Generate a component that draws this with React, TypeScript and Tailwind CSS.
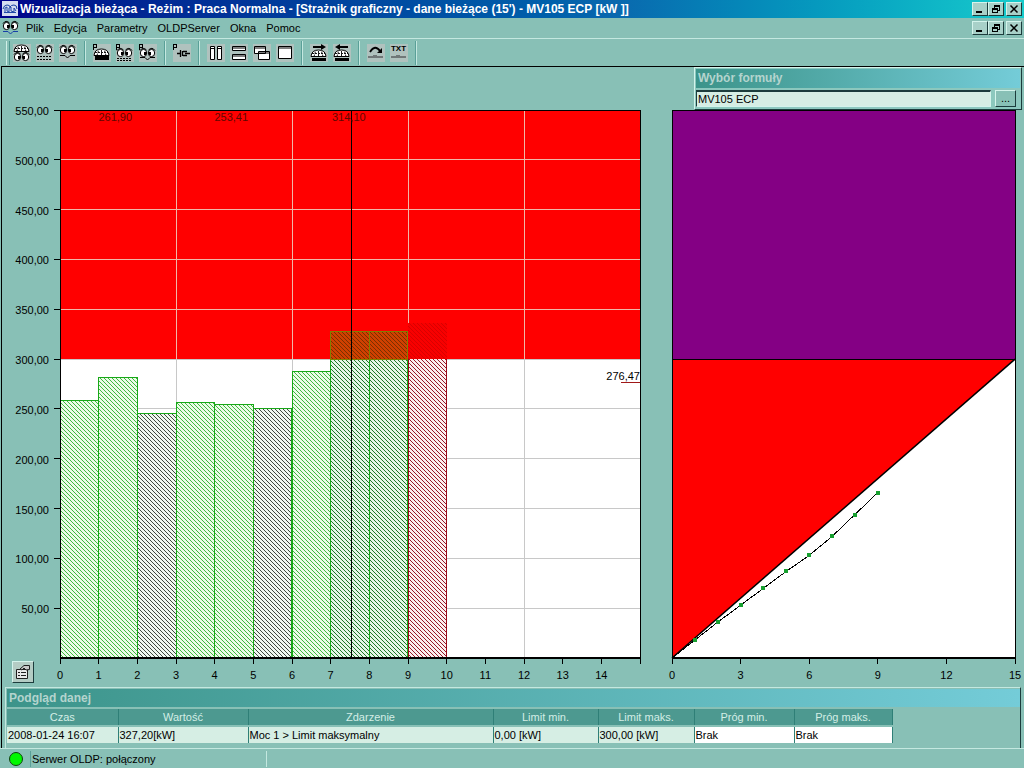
import React from "react";

const BARS = [
  { value: 258, hatch: "green" },
  { value: 282, hatch: "green" },
  { value: 245, hatch: "dark" },
  { value: 256, hatch: "green" },
  { value: 254, hatch: "green" },
  { value: 250, hatch: "dark" },
  { value: 288, hatch: "green" },
  { value: 328, hatch: "deep" },
  { value: 328, hatch: "deep" },
];
const POINTS = [18, 36, 53, 70, 87, 103, 122, 144, 166];
const Y_TICKS = [550, 500, 450, 400, 350, 300, 250, 200, 150, 100, 50];
const MAX = 550;
const LIMIT = 300;

const px = (v: number) => `${(v / 15) * 100}%`;
const py = (v: number) => `${((MAX - v) / MAX) * 100}%`;
const ph = (v: number) => `${(v / MAX) * 100}%`;

const RAISED =
  "border border-t-[#d4f4ec] border-l-[#d4f4ec] border-r-[#1c3c3c] border-b-[#1c3c3c]";
const HEAD = "border-r border-[#2f7f77] bg-[#4d9990] text-center font-normal text-[#d4eee6]";
const CELL = "border-r border-[#2f7f77] bg-[#d6eee4] px-px";
const CELL_WHITE = "border-r border-[#2f7f77] bg-white px-px";

function Hatch({ id, color, back }: { id: string; color: string; back: string }) {
  return (
    <pattern id={id} width="4" height="4" patternUnits="userSpaceOnUse">
      <rect width="4" height="4" fill={back} />
      <path d="M0 0h1v1h-1zM1 1h1v1h-1zM2 2h1v1h-1zM3 3h1v1h-1z" fill={color} shapeRendering="crispEdges" />
    </pattern>
  );
}

function BarChart() {
  return (
    <svg
      className="block w-0 min-w-0 flex-[580] overflow-visible text-[11px]"
      role="img"
      aria-label="Wykres słupkowy"
    >
      <defs>
        <Hatch id="green" color="#40b840" back="#ecfbe8" />
        <Hatch id="dark" color="#404840" back="#f0f8f0" />
        <Hatch id="deep" color="#207828" back="#e6f6e6" />
        <Hatch id="over" color="#7a3000" back="#d04000" />
        <Hatch id="red" color="#981828" back="#fbeeee" />
        <Hatch id="redOver" color="#d80000" back="#f80000" />
      </defs>
      <g shapeRendering="crispEdges">
        <rect width="100%" height="100%" fill="#fff" />
        <rect width="100%" height={ph(MAX - LIMIT)} fill="#f00" />
        {Y_TICKS.slice(1).map((v) => (
          <line key={v} x1="0" x2="100%" y1={py(v)} y2={py(v)} stroke={v > LIMIT ? "#f0b8a8" : "#c8c8c8"} />
        ))}
        {[3, 6, 9, 12].map((v) => (
          <g key={v}>
            <line x1={px(v)} x2={px(v)} y1="0" y2={py(LIMIT)} stroke="#f0b8a8" />
            <line x1={px(v)} x2={px(v)} y1={py(LIMIT)} y2="100%" stroke="#c8c8c8" />
          </g>
        ))}
        {BARS.map((b, i) => (
          <g key={i}>
            <rect
              x={px(i)}
              y={py(Math.min(b.value, LIMIT))}
              width={px(1)}
              height={ph(Math.min(b.value, LIMIT))}
              fill={`url(#${b.hatch})`}
            />
            {b.value > LIMIT && (
              <rect x={px(i)} y={py(b.value)} width={px(1)} height={ph(b.value - LIMIT)} fill="url(#over)" />
            )}
            <rect x={px(i)} y={py(b.value)} width={px(1)} height={ph(b.value)} fill="none" stroke="#18a818" />
            {b.value > LIMIT && (
              <rect
                x={px(i)}
                y={py(b.value)}
                width={px(1)}
                height={ph(b.value - LIMIT)}
                fill="none"
                stroke="#808000"
              />
            )}
          </g>
        ))}
        <rect x={px(9)} y={py(336)} width={px(1)} height={ph(36)} fill="url(#redOver)" />
        <rect x={px(9)} y={py(LIMIT)} width={px(1)} height={ph(LIMIT)} fill="url(#red)" />
        <line x1={px(9)} x2={px(9)} y1={py(LIMIT)} y2="100%" stroke="#980818" />
        <line x1={px(10)} x2={px(10)} y1={py(LIMIT)} y2="100%" stroke="#980818" />
        <line x1={px(7.53)} x2={px(7.53)} y1="0" y2="100%" stroke="#000" />
        <line x1="96.7%" x2="100%" y1={py(276.47)} y2={py(276.47)} stroke="#a01818" />
        <rect width="100%" height="100%" fill="none" stroke="#000" />
        <line x1="0" x2="100%" y1="100%" y2="100%" stroke="#000" strokeWidth="2" />
        {Y_TICKS.map((v) => (
          <line key={v} x1="-6" x2="0" y1={py(v)} y2={py(v)} stroke="#000" />
        ))}
        {Array.from({ length: 16 }, (_, i) => (
          <svg key={i} x={px(i)} y="100%" overflow="visible">
            <line x1="0" x2="0" y1="0" y2="6" stroke="#000" />
          </svg>
        ))}
      </g>
      <text x={px(1.43)} y="11" textAnchor="middle" fill="#600800">261,90</text>
      <text x={px(4.43)} y="11" textAnchor="middle" fill="#600800">253,41</text>
      <text x={px(7.47)} y="11" textAnchor="middle" fill="#600800">314,10</text>
      <text x="100%" y={py(276.47)} dy="-3" textAnchor="end">276,47</text>
      {Y_TICKS.map((v) => (
        <text key={v} x="-11" y={py(v)} dy="5" textAnchor="end">
          {`${v},00`}
        </text>
      ))}
      {Array.from({ length: 15 }, (_, i) => (
        <text key={i} x={px(i)} y="100%" dy="21" textAnchor="middle">
          {i}
        </text>
      ))}
    </svg>
  );
}

function LineChart() {
  const pts = [[0, 0], ...POINTS.map((v, i) => [i + 1, v])];
  return (
    <svg
      className="block w-0 min-w-0 flex-[343] overflow-visible text-[11px]"
      role="img"
      aria-label="Wykres liniowy"
    >
      <rect width="100%" height="100%" fill="#fff" />
      <rect width="100%" height={ph(MAX - LIMIT)} fill="#840084" />
      <svg viewBox="0 0 15 550" width="100%" height="100%" preserveAspectRatio="none">
        <path d="M0 250H15L0 550Z" fill="#f00" />
      </svg>
      <line x1="0" x2="100%" y1={py(LIMIT)} y2={py(LIMIT)} stroke="#000" shapeRendering="crispEdges" />
      <line x1="0" x2="100%" y1="100%" y2={py(LIMIT)} stroke="#000" strokeWidth="1.5" />
      {pts.slice(1).map((p, i) => (
        <line key={i} x1={px(pts[i][0])} y1={py(pts[i][1])} x2={px(p[0])} y2={py(p[1])} stroke="#000" shapeRendering="crispEdges" />
      ))}
      {POINTS.map((v, i) => (
        <svg key={i} x={px(i + 1)} y={py(v)} overflow="visible">
          <rect x="-2" y="-2" width="4" height="4" fill="#18a030" shapeRendering="crispEdges" />
        </svg>
      ))}
      <g shapeRendering="crispEdges">
        <rect width="100%" height="100%" fill="none" stroke="#000" />
        <line x1="0" x2="100%" y1="100%" y2="100%" stroke="#000" strokeWidth="2" />
        {[0, 3, 6, 9, 12, 15].map((v) => (
          <svg key={v} x={px(v)} y="100%" overflow="visible">
            <line x1="0" x2="0" y1="0" y2="6" stroke="#000" />
          </svg>
        ))}
      </g>
      {[0, 3, 6, 9, 12, 15].map((v) => (
        <text key={v} x={px(v)} y="100%" dy="21" textAnchor="middle">
          {v}
        </text>
      ))}
    </svg>
  );
}

function Eyes({ y = 0 }: { y?: number }) {
  return (
    <g transform={`translate(0 ${y})`}>
      <path d="M1 3.5Q4 -.5 7.5 3M9.5 3Q13 -.5 16 3.5" fill="none" stroke="#000" />
      <ellipse cx="4.5" cy="6" rx="3.2" ry="3.6" fill="#fff" stroke="#000" />
      <ellipse cx="12.5" cy="6" rx="3.2" ry="3.6" fill="#fff" stroke="#000" />
      <rect x="5" y="5" width="2" height="3" />
      <rect x="10" y="5" width="2" height="3" />
    </g>
  );
}

function Dome({ y = 0 }: { y?: number }) {
  return (
    <g transform={`translate(0 ${y})`}>
      <path d="M1 7.5Q1.500 1 8.500 1Q15.500 1 16 7.500Z" fill="#fff" stroke="#000" />
      <path d="M4 7.500L5.500 2.500M8.500 7V1M13 7.500L11.500 2.500M2 4.500H15" fill="none" stroke="#000" strokeWidth=".9" strokeDasharray="2 1" />
    </g>
  );
}

const P_MARK = <path d="M.5 6V.5H3.500V3.500H1" fill="none" stroke="#000" shapeRendering="crispEdges" />;

const ICONS: Record<string, React.ReactNode> = {
  domeEyes: <><Dome /><Eyes y={7} /></>,
  eyesList: <><Eyes /><path d="M1 12.500H16M1 15.500H16" stroke="#000" strokeDasharray="2 1" /></>,
  eyesLine: <><Eyes /><path d="M1 11.500H6L8.500 14L11 11.500H16" fill="none" stroke="#000" /></>,
  pDome: <><Dome y={4} />{P_MARK}<rect x="2" y="12" width="14" height="4" /></>,
  pEyesList: <><Eyes y={3} />{P_MARK}<path d="M1 14.500H16M1 16.500H16" stroke="#000" strokeDasharray="2 1" /></>,
  pEyesLine: <><Eyes y={3} />{P_MARK}<path d="M1 13.500H6L8.500 16L11 13.500H16" fill="none" stroke="#000" /></>,
  pPlug: <>{P_MARK}<path d="M4 9.500H8M7.500 6V13M9.500 7V12M10 7.500H14M10 11.500H14M12 9.500H17" fill="none" stroke="#000" strokeWidth="1.3" /></>,
  columns: <path d="M3.500 2.500h4v13h-4zM10.500 2.500h4v13h-4zM3.500 4.500h4M10.500 4.500h4" fill="#fff" stroke="#000" />,
  rows: <path d="M2.500 2.500h13v4h-13zM2.500 10.500h13v5h-13zM2.500 4h13M2.500 12h13" fill="#fff" stroke="#000" />,
  cascade: <path d="M1.500 2.500h11v7h-11zM1.500 4h11M5.500 7.500h11v8h-11zM5.500 9h11" fill="#fff" stroke="#000" />,
  single: <path d="M2.500 2.500h13v12h-13zM2.500 4h13" fill="#fff" stroke="#000" />,
  right: <><path d="M3 2h8V0l5 3-5 3V4H3z" /><Dome y={5} /><rect x="2" y="14" width="14" height="3" /></>,
  left: <><path d="M15 2H7V0L2 3l5 3V4h8z" /><Dome y={5} /><rect x="2" y="14" width="14" height="3" /></>,
  curve: <><path d="M3 8Q8 0 13 7" fill="none" stroke="#000" strokeWidth="1.800" /><path d="M15 4V9H10z" /><path d="M1 12h5v-1h4v1h6v2H1z" fill="#707878" /></>,
  txt: <><text x="8.500" y="7" textAnchor="middle" fontSize="8" fontWeight="bold">TXT</text><path d="M1 12h5v-1h4v1h6v2H1z" fill="#707878" /></>,
};

const TOOL_GROUPS = [
  [["domeEyes", "Strażnik"], ["eyesList", "Dane"], ["eyesLine", "Przebieg"]],
  [["pDome", "Parametry strażnika"], ["pEyesList", "Parametry danych"], ["pEyesLine", "Parametry przebiegu"]],
  [["pPlug", "Połączenie"]],
  [["columns", "Okna pionowo"], ["rows", "Okna poziomo"], ["cascade", "Kaskada"], ["single", "Maksymalizuj"]],
  [["right", "Następny"], ["left", "Poprzedni"]],
  [["curve", "Wykres"], ["txt", "Tekst"]],
];

function WindowButtons() {
  const cls = `${RAISED} flex h-[14px] w-4 items-center justify-center bg-[#a8d0c8]`;
  return (
    <div className="ml-auto flex">
      <button className={cls} aria-label="Minimalizuj">
        <svg width="10" height="10" shapeRendering="crispEdges"><rect x="1" y="7" width="6" height="2" /></svg>
      </button>
      <button className={cls} aria-label="Przywróć">
        <svg width="10" height="10" fill="none" stroke="#000" shapeRendering="crispEdges">
          <path d="M3.500 4V1.500H8.500V6.500H7M3 2H9M1.500 4.500H6.500V8.500H1.500ZM1 5H7" />
        </svg>
      </button>
      <button className={`${cls} ml-[2px]`} aria-label="Zamknij">
        <svg width="10" height="10" stroke="#000" strokeWidth="1.500"><path d="M1.500 1.500L8.500 8.500M8.500 1.500L1.500 8.500" /></svg>
      </button>
    </div>
  );
}

export default function App() {
  return (
    <div className="flex min-h-screen flex-col bg-[#88c0b6] font-['Liberation_Sans',Arial,sans-serif] text-[11px] leading-[14px] text-black">
      <header>
        <div className="flex h-[18px] items-center bg-linear-to-r from-[#00008a] via-[#0a68ae] via-60% to-[#18cccc] px-[2px]">
          <svg width="16" height="16" className="shrink-0" aria-hidden="true">
            <rect width="16" height="15" fill="#d4dcf0" />
            <path d="M1 8Q2 4 5 4T8 6Q9 4 12 4T15 8" fill="none" stroke="#1840a0" />
            <path d="M3 11V7L5 6V10L7 11V7L9 6V10L12 11V7L14 10M2 11.500H14" fill="none" stroke="#2048a8" />
          </svg>
          <h1 className="ml-[2px] whitespace-nowrap text-[12px] font-bold text-white">
            Wizualizacja bieżąca - Reżim : Praca Normalna - [Strażnik graficzny - dane bieżące (15') - MV105 ECP [kW ]]
          </h1>
          <WindowButtons />
        </div>
        <nav className="flex h-5 items-center px-[2px]" aria-label="Menu">
          <svg width="18" height="16" viewBox="0 0 18 16" className="mr-[6px]" aria-hidden="true">
            <Eyes />
            <path d="M1 11.500H6L8.500 14L11 11.500H16" fill="none" stroke="#1840a8" />
          </svg>
          <div className="flex gap-[10px]">
            {["Plik", "Edycja", "Parametry", "OLDPServer", "Okna", "Pomoc"].map((m) => (
              <button key={m}>{m}</button>
            ))}
          </div>
          <WindowButtons />
        </nav>
        <div className="flex h-7 items-center border-t border-[#c4e8e0] pl-[6px]" role="toolbar" aria-label="Narzędzia">
          <span className="h-6 w-1 border-x border-l-[#d0f0e8] border-r-[#4c948c]" />
          {TOOL_GROUPS.map((g, i) => (
            <React.Fragment key={i}>
              {g.map(([icon, label]) => (
                <button key={icon} aria-label={label} className="flex w-[23px] justify-center">
                  <svg width="18" height="18" viewBox="0 0 18 18" className="bg-[#b0c2be]">
                    {ICONS[icon]}
                  </svg>
                </button>
              ))}
              <span className="flex w-[11px] justify-center">
                <span className="h-6 w-[2px] border-x border-l-[#5aa098] border-r-[#c4e8e0]" />
              </span>
            </React.Fragment>
          ))}
        </div>
      </header>

      <main className="ml-px flex flex-1 flex-col border-t border-l border-black">
        <div className="flex h-[43px] justify-end pr-[2px]">
          <section className={`${RAISED} z-10 flex w-[328px] flex-col bg-[#8cc8be] p-px`}>
            <h2 className="h-[19px] bg-linear-to-r from-[#3c948a] to-[#74ccd8] px-[2px] text-[12px] leading-[19px] font-bold text-[#b4d4ce]">
              Wybór formuły
            </h2>
            <div className="mt-[2px] flex h-[17px] gap-1 pr-1">
              <input
                aria-label="Formuła"
                defaultValue="MV105 ECP"
                className="min-w-0 flex-1 border border-t-2 border-t-[#1c3c3c] border-l-[#1c3c3c] border-r-[#d4f4ec] border-b-[#d4f4ec] bg-[#d6eee4] px-px"
              />
              <button aria-label="Wybierz formułę" className={`${RAISED} w-[21px] bg-[#88c0b6] leading-[13px]`}>...</button>
            </div>
          </section>
        </div>
        <div className="flex flex-1 gap-8 pr-[9px] pl-[58px]">
          <BarChart />
          <LineChart />
        </div>
        <div className="h-[29px] pt-[3px] pl-[10px]">
          <button aria-label="Właściwości" className={`${RAISED} flex h-[22px] w-[22px] items-center justify-center bg-[#b4ccc4]`}>
            <svg width="16" height="16" viewBox="0 0 16 16" fill="#e8e8e8" stroke="#202020">
              <path d="M1.500 5.500H12.500V14.500H1.500Z" />
              <path d="M3 8.500H5M6 8.500H11M3 11.500H5M6 11.500H11" />
              <path d="M5 5L9 1.500H14.500V5.500L11 6L9 4L7 6Z" fill="#c8c8c8" />
            </svg>
          </button>
        </div>
        <section className="mr-[3px] ml-[3px] border-t border-l border-r border-t-[#c4e8e0] border-l-[#c4e8e0] border-r-[#1c3c3c] pt-px pb-[5px] pl-px">
          <h2 className="h-[18px] bg-linear-to-r from-[#3c948a] to-[#74ccd8] px-[2px] text-[12px] leading-[18px] font-bold text-[#b4d4ce]">
            Podgląd danej
          </h2>
          <table className="w-[885px] table-fixed border-collapse">
            <colgroup>
              <col className="w-[111px]" />
              <col className="w-[130px]" />
              <col className="w-[245px]" />
              <col className="w-[105px]" />
              <col className="w-[96px]" />
              <col className="w-[100px]" />
              <col className="w-[98px]" />
            </colgroup>
            <thead>
              <tr className="h-[18px] border-y-2 border-[#88c0b6]">
                {["Czas", "Wartość", "Zdarzenie", "Limit min.", "Limit maks.", "Próg min.", "Próg maks."].map((h) => (
                  <th key={h} scope="col" className={HEAD}>{h}</th>
                ))}
              </tr>
            </thead>
            <tbody>
              <tr className="h-[17px]">
                <td className={CELL}>2008-01-24 16:07</td>
                <td className={CELL}>327,20[kW]</td>
                <td className={CELL}>Moc 1 &gt; Limit maksymalny</td>
                <td className={CELL}>0,00 [kW]</td>
                <td className={CELL}>300,00 [kW]</td>
                <td className={CELL_WHITE}>Brak</td>
                <td className={CELL_WHITE}>Brak</td>
              </tr>
            </tbody>
          </table>
        </section>
      </main>

      <footer className="flex h-5 items-center border-t border-[#c4e8e0] pl-2">
        <svg width="16" height="16" aria-hidden="true">
          <circle cx="8" cy="8" r="6.500" fill="#00f800" stroke="#104010" />
        </svg>
        <span className="ml-[6px] flex h-4 w-[237px] items-center border-x border-l-[#5aa098] border-r-[#c4e8e0] pl-px">
          Serwer OLDP: połączony
        </span>
      </footer>
    </div>
  );
}
